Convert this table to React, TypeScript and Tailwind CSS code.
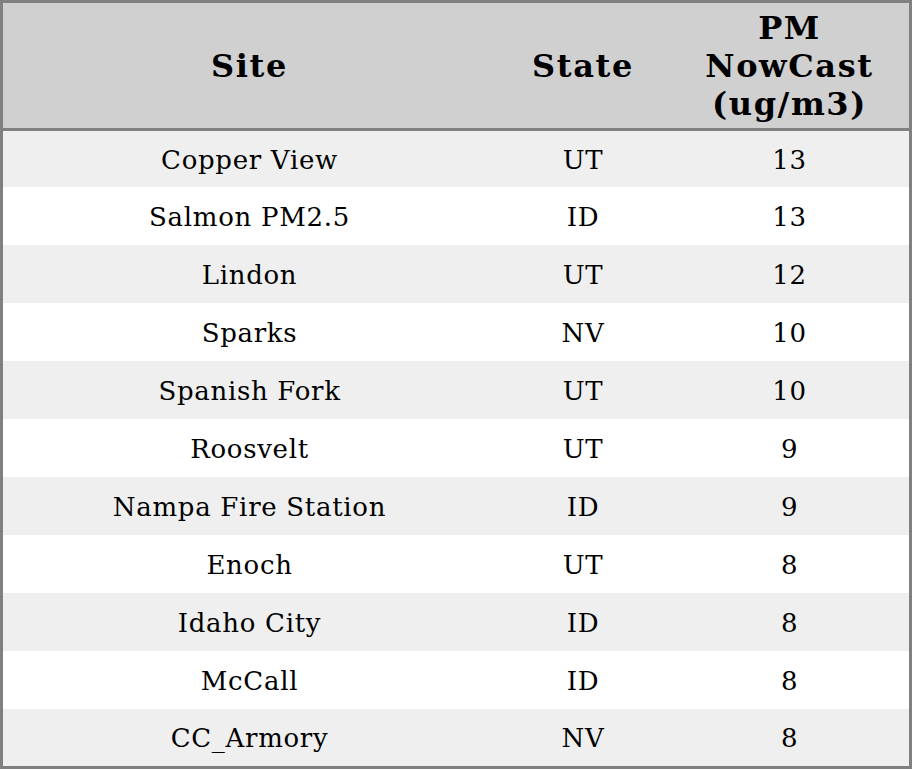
import React from 'react';

const rows: [string, string, string][] = [
  ['Copper View', 'UT', '13'],
  ['Salmon PM2.5', 'ID', '13'],
  ['Lindon', 'UT', '12'],
  ['Sparks', 'NV', '10'],
  ['Spanish Fork', 'UT', '10'],
  ['Roosvelt', 'UT', '9'],
  ['Nampa Fire Station', 'ID', '9'],
  ['Enoch', 'UT', '8'],
  ['Idaho City', 'ID', '8'],
  ['McCall', 'ID', '8'],
  ['CC_Armory', 'NV', '8'],
];

const rowHeight = (i: number) => {
  if (i === 0) return 'h-[56px]';
  if (i === rows.length - 1) return 'h-[57px]';
  return 'h-[58px]';
};

const App: React.FC = () => {
  return (
    <div className="w-[912px] h-[769px] bg-white text-black font-['DejaVu_Serif',serif]">
      <div className="border-[3px] border-[#808080] h-full flex flex-col">
        <div className="grid grid-cols-[493px_174px_1fr] h-[125px] bg-[#d0d0d0] border-b-[3px] border-[#808080] box-content font-bold text-[32px] leading-[38px] tracking-[1.6px]">
          <div className="flex items-center justify-center text-center">Site</div>
          <div className="flex items-center justify-center text-center">State</div>
          <div className="flex items-center justify-center text-center">
            PM
            <br />
            NowCast
            <br />
            (ug/m3)
          </div>
        </div>

        {rows.map(([site, state, value], i) => (
          <div
            key={site}
            className={`grid grid-cols-[493px_174px_1fr] pt-[2px] text-[26px] tracking-[0.7px] ${rowHeight(i)} ${
              i % 2 === 0 ? 'bg-[#efefef]' : 'bg-white'
            }`}
          >
            <div className="flex items-center justify-center">{site}</div>
            <div className="flex items-center justify-center">{state}</div>
            <div className="flex items-center justify-center">{value}</div>
          </div>
        ))}
      </div>
    </div>
  );
};

export default App;
